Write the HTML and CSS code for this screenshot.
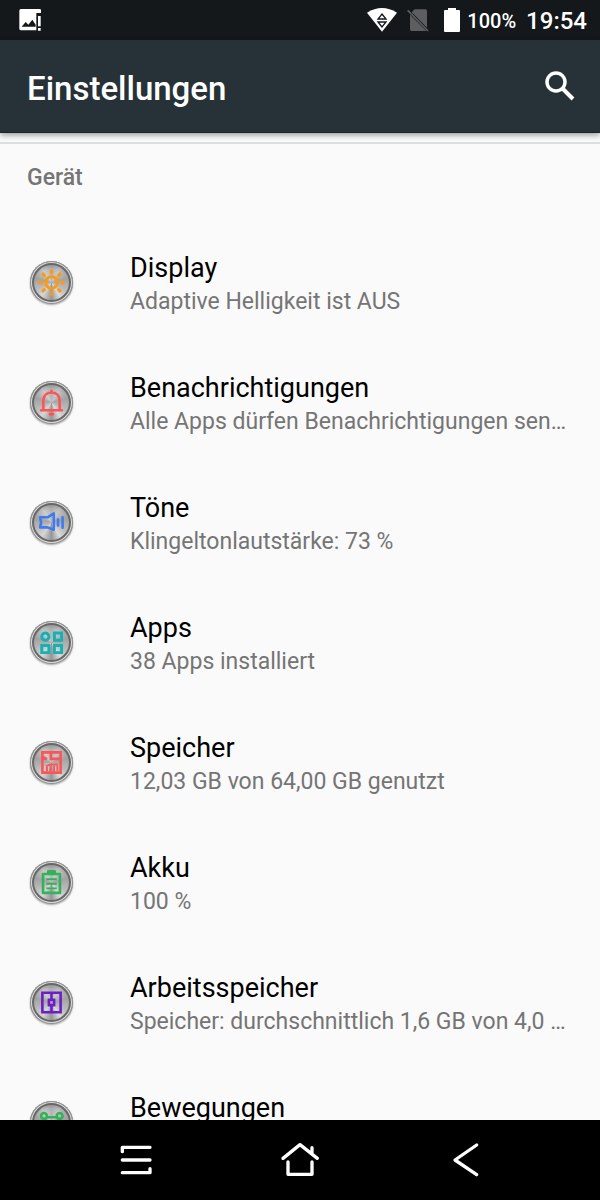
FILE: index.html
```html
<!DOCTYPE html>
<html lang="de">
<head>
    <meta charset="UTF-8">
    <meta name="viewport" content="width=device-width, initial-scale=1.0">
    <title>Einstellungen</title>
    <link rel="stylesheet" href="styles.css">
</head>
<body>

    <div class="status-bar">
        <svg class="status-shot" width="24" height="24" viewBox="0 0 72 72">
            <path fill="#fff" d="M6 3h56q4 0 4 4v8H52v52H6q-5 0-5-5V8q0-5 5-5z"/>
            <path fill="#14181b" d="M8 56l12-14 8 8 12-15 10 15v6z"/>
            <path fill="#fff" d="M57 24h8v31h-8zM57 60h8v8h-8z"/>
        </svg>
        <div class="status-right">
            <svg class="wifi" width="30" height="24" viewBox="0 0 90 72">
                <path fill="#fff" d="M0 14Q45-14 90 14L45 71z"/>
                <path fill="none" stroke="#14181b" stroke-width="4" d="M45 18L57 33H33zM45 57L33 42h24z"/>
            </svg>
            <svg class="sim" width="22" height="24" viewBox="0 0 66 72">
                <path fill="#5c5e60" d="M23 4h32q5 0 5 5v50L14 13z"/>
                <path fill="#5c5e60" d="M9 20l49 49H14q-5 0-5-5z"/>
                <path stroke="#5c5e60" stroke-width="5" d="M2 7l61 62"/>
            </svg>
            <svg class="battery" width="16" height="24" viewBox="0 0 16 24">
                <path fill="#fff" d="M4 0h8v2h3q1 0 1 1v20q0 1-1 1H1q-1 0-1-1V3q0-1 1-1h3z"/>
            </svg>
            <span class="percent">100%</span>
            <span class="clock">19:54</span>
        </div>
    </div>

    <header class="toolbar">
        <h1>Einstellungen</h1>
        <button class="search" aria-label="Suchen">
            <svg width="30" height="30" viewBox="0 0 60 60">
                <circle cx="22" cy="22" r="18" fill="none" stroke="#fff" stroke-width="7"/>
                <path stroke="#fff" stroke-width="8" d="M34 34l22 22"/>
            </svg>
        </button>
    </header>

    <main class="content">
        <h2>Gerät</h2>
        <nav class="list">
            <a class="item" href="#display">
                <span class="dial">
                    <svg class="orange" viewBox="-66 -66 132 132">
                        <circle r="18" stroke-width="9"/>
                        <path stroke-width="10" stroke-linecap="round" d="M0-31v-5M0 31v5M-31 0h-5M31 0h5M-22-22l-4-4M22-22l4-4M-22 22l-4 4M22 22l4 4"/>
                    </svg>
                </span>
                <span class="text">
                    <span class="title">Display</span>
                    <span class="summary">Adaptive Helligkeit ist AUS</span>
                </span>
            </a>
            <a class="item" href="#benachrichtigungen">
                <span class="dial">
                    <svg class="red" viewBox="-66 -66 132 132">
                        <path stroke-width="8" stroke-linecap="round" d="M-32 24H32M-25 22V-4C-25-22-14-31 0-31S25-22 25-4V22M0-32v-4"/>
                        <path stroke-width="9" stroke-linecap="round" d="M-4 36H4"/>
                    </svg>
                </span>
                <span class="text">
                    <span class="title">Benachrichtigungen</span>
                    <span class="summary">Alle Apps dürfen Benachrichtigungen senden</span>
                </span>
            </a>
            <a class="item" href="#toene">
                <span class="dial">
                    <svg class="blue" viewBox="-66 -66 132 132">
                        <path stroke-width="8" stroke-linejoin="round" d="M-35-16H-12L7-28V22L-12 15H-35L-32 0z"/>
                        <path stroke-width="8" stroke-linecap="round" d="M20-9V9M34-16V16"/>
                    </svg>
                </span>
                <span class="text">
                    <span class="title">Töne</span>
                    <span class="summary">Klingeltonlautstärke: 73 %</span>
                </span>
            </a>
            <a class="item" href="#apps">
                <span class="dial">
                    <svg class="teal" viewBox="-66 -66 132 132">
                        <circle cx="-19" cy="-18" r="11" stroke-width="9"/>
                        <path stroke-width="9" d="M9-29H31V-7H9zM-30 9H-8V31H-30zM9 9H31V31H9z"/>
                    </svg>
                </span>
                <span class="text">
                    <span class="title">Apps</span>
                    <span class="summary">38 Apps installiert</span>
                </span>
            </a>
            <a class="item" href="#speicher">
                <span class="dial">
                    <svg class="red" viewBox="-66 -66 132 132">
                        <path stroke-width="8" d="M-28-31H28V31H-28zM-2-31V-11H26M-26-16l12 6"/>
                        <path stroke-width="6" d="M-14 28V14M-3 28V10M8 28V10M18 28V10M-17 12l13-6H20"/>
                    </svg>
                </span>
                <span class="text">
                    <span class="title">Speicher</span>
                    <span class="summary">12,03 GB von 64,00 GB genutzt</span>
                </span>
            </a>
            <a class="item" href="#akku">
                <span class="dial">
                    <svg class="green" viewBox="-66 -66 132 132">
                        <path stroke-width="8" stroke-linejoin="round" d="M-26-26H26V32H-26zM-10-27V-34H10V-27"/>
                        <path stroke-width="6" d="M-16-10H16M-16 4H16M-16 18H16"/>
                    </svg>
                </span>
                <span class="text">
                    <span class="title">Akku</span>
                    <span class="summary">100 %</span>
                </span>
            </a>
            <a class="item" href="#arbeitsspeicher">
                <span class="dial">
                    <svg class="purple" viewBox="-66 -66 132 132">
                        <path stroke-width="8" d="M-28-30H28V30H-28zM0-30V-9M0 9V30M-8-8H8V8H-8z"/>
                    </svg>
                </span>
                <span class="text">
                    <span class="title">Arbeitsspeicher</span>
                    <span class="summary">Speicher: durchschnittlich 1,6 GB von 4,0 GB genutzt</span>
                </span>
            </a>
            <a class="item" href="#bewegungen">
                <span class="dial">
                    <svg class="green" viewBox="-66 -66 132 132">
                        <circle cx="-23" cy="-20" r="9" stroke-width="8"/>
                        <circle cx="25" cy="-20" r="9" stroke-width="8"/>
                        <path stroke-width="8" d="M-15-16H17M-20-10L-8 6V26H12V6L23-10"/>
                    </svg>
                </span>
                <span class="text">
                    <span class="title">Bewegungen</span>
                </span>
            </a>
        </nav>
    </main>

    <footer class="nav-bar">
        <button aria-label="Letzte Apps">
            <svg width="40" height="40" viewBox="0 0 120 120">
                <path d="M19 35V22H102M19 60H102M19 98H102V86"/>
            </svg>
        </button>
        <button aria-label="Startseite">
            <svg width="40" height="40" viewBox="0 0 120 120">
                <path d="M9 55L60 14L112 55M96 40V23M24 66V103H96V66"/>
            </svg>
        </button>
        <button aria-label="Zurück">
            <svg width="40" height="40" viewBox="0 0 120 120">
                <path d="M98 15L33 60L98 104"/>
            </svg>
        </button>
    </footer>

</body>
</html>
```

FILE: styles.css
```css
* {
    margin: 0;
    padding: 0;
    box-sizing: border-box;
}

body {
    display: flex;
    flex-direction: column;
    height: 100vh;
    overflow: hidden;
    background: #fafafa;
    font-family: Roboto, "Liberation Sans", sans-serif;
}

button {
    background: none;
    border: none;
    cursor: pointer;
}

svg {
    display: block;
}

.status-bar {
    display: flex;
    align-items: center;
    justify-content: space-between;
    height: 40px;
    flex-shrink: 0;
    padding: 0 13px 0 19px;
    background: #14181b;
    color: #fff;
}

.status-right {
    display: flex;
    align-items: center;
}

.sim {
    margin-left: 10px;
}

.battery {
    margin-left: 15px;
}

.percent {
    padding-top: 2px;
    margin-left: 7px;
    font-size: 20px;
    font-weight: 500;
}

.clock {
    padding-top: 2px;
    margin-left: 10px;
    font-size: 24px;
    font-weight: 500;
}

.toolbar {
    position: relative;
    display: flex;
    align-items: center;
    justify-content: space-between;
    height: 93px;
    flex-shrink: 0;
    padding: 0 25px 0 27px;
    background: #263238;
    border-bottom: 1px solid #1a2327;
    box-shadow: 0 2px 6px rgba(0, 0, 0, 0.4);
    color: #fff;
}

.toolbar h1 {
    padding-top: 4px;
    font-size: 33px;
    font-weight: 500;
}

.content {
    flex: 1;
    min-height: 0;
    margin-top: 9px;
    overflow: hidden;
    border-top: 2px solid #dedede;
}

.content h2 {
    height: 78px;
    padding: 18px 27px 0;
    color: #757575;
    font-size: 23px;
    line-height: 32px;
    font-weight: 500;
}

.item {
    display: flex;
    align-items: center;
    height: 120px;
    padding: 0 27px 0 30px;
    color: #000;
    text-decoration: none;
}

.dial {
    width: 43px;
    height: 43px;
    margin-right: 57px;
    flex-shrink: 0;
    border-radius: 50%;
    background: conic-gradient(#b4b4b4, #c8c8c8 30deg, #a4a4a4 75deg, #bcbcbc 120deg, #dadada 150deg, #969696 180deg, #d6d6d6 215deg, #b8b8b8 250deg, #a4a4a4 285deg, #cecece 325deg, #b4b4b4);
    box-shadow: inset 0 0 0 1px #8c8c8c, inset 0 0 0 2px #dcdcdc, inset 0 0 0 4px #686868, inset 0 5px 5px rgba(0, 0, 0, 0.25), 0 1px 2px rgba(0, 0, 0, 0.35);
}

.dial svg {
    width: 100%;
    height: 100%;
    fill: none;
}

.orange {
    stroke: #f99b16;
}

.red {
    stroke: #fb5558;
}

.blue {
    stroke: #3d7bf0;
}

.teal {
    stroke: #14b1b5;
}

.green {
    stroke: #31b35a;
}

.purple {
    stroke: #6c1fc4;
}

.text {
    flex: 1;
    min-width: 0;
    height: 66px;
    padding-top: 2px;
}

.title,
.summary {
    display: block;
    overflow: hidden;
    white-space: nowrap;
    text-overflow: ellipsis;
}

.title {
    font-size: 27px;
    line-height: 34px;
}

.summary {
    color: #757575;
    font-size: 23px;
    line-height: 34px;
}

.nav-bar {
    display: flex;
    align-items: center;
    justify-content: center;
    gap: 124px;
    height: 80px;
    flex-shrink: 0;
    background: #000;
}

.nav-bar button {
    width: 40px;
    height: 40px;
}

.nav-bar path {
    fill: none;
    stroke: #fff;
    stroke-width: 10;
    stroke-linecap: round;
    stroke-linejoin: round;
}
```
